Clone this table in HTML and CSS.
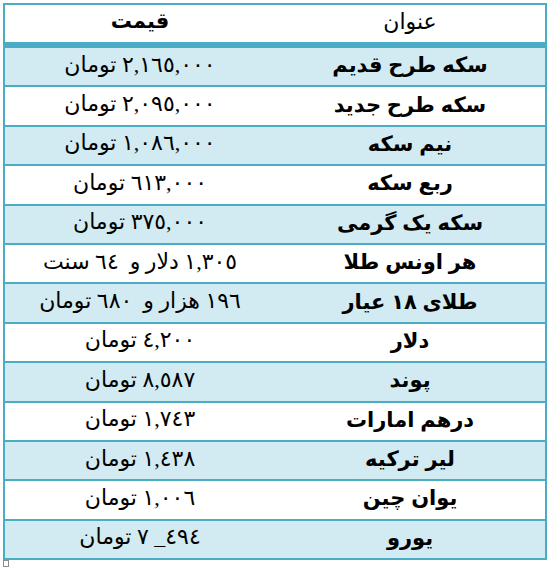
FILE: index.html
```html
<!DOCTYPE html>
<html lang="fa">
<head>
<meta charset="utf-8">
<link rel="stylesheet" href="styles.css">
</head>
<body>
<div class="page">
<table class="prices" dir="rtl">
  <thead>
    <tr>
      <th class="title-col head-title">عنوان</th>
      <th class="price-col head-price">قیمت</th>
    </tr>
  </thead>
  <tbody>
    <tr class="shade"><td class="title-col">سکه طرح قدیم</td><td class="price-col">٢,١٦٥,٠٠٠ تومان</td></tr>
    <tr><td class="title-col">سکه طرح جدید</td><td class="price-col">٢,٠٩٥,٠٠٠ تومان</td></tr>
    <tr class="shade"><td class="title-col">نیم سکه</td><td class="price-col">١,٠٨٦,٠٠٠ تومان</td></tr>
    <tr><td class="title-col">ربع سکه</td><td class="price-col">٦١٣,٠٠٠ تومان</td></tr>
    <tr class="shade"><td class="title-col">سکه یک گرمی</td><td class="price-col">٣٧٥,٠٠٠ تومان</td></tr>
    <tr><td class="title-col">هر اونس طلا</td><td class="price-col">١,٣٠٥ دلار و&nbsp; ٦٤ سنت</td></tr>
    <tr class="shade"><td class="title-col">طلای ١٨ عیار</td><td class="price-col">١٩٦ هزار و&nbsp; ٦٨٠ تومان</td></tr>
    <tr><td class="title-col">دلار</td><td class="price-col">٤,٢٠٠ تومان</td></tr>
    <tr class="shade"><td class="title-col">پوند</td><td class="price-col">٨,٥٨٧ تومان</td></tr>
    <tr><td class="title-col">درهم امارات</td><td class="price-col">١,٧٤٣ تومان</td></tr>
    <tr class="shade"><td class="title-col">لیر ترکیه</td><td class="price-col">١,٤٣٨ تومان</td></tr>
    <tr><td class="title-col">یوان چین</td><td class="price-col">١,٠٠٦ تومان</td></tr>
    <tr class="shade"><td class="title-col">یورو</td><td class="price-col">٤٩٤_ ٧ تومان</td></tr>
  </tbody>
</table>
<div class="para-mark"></div>
</div>
</body>
</html>
```

FILE: styles.css
```css
html, body {
  margin: 0;
  padding: 0;
  background: #ffffff;
}

.page {
  padding: 3px 0 0 3px;
}

.prices {
  border-collapse: separate;
  border-spacing: 0;
  width: 544px;
  table-layout: fixed;
  border-right: 2px solid #4bacc6;
  border-bottom: 2px solid #4bacc6;
  color: #000;
}

.prices th,
.prices td {
  border-top: 2px solid #4bacc6;
  padding: 0 0 4px 0;
  text-align: center;
  vertical-align: middle;
  width: 269px;
  line-height: 1;
}

.prices .title-col { border-left: 0; }
.prices .price-col { border-left: 2px solid #4bacc6; }

.prices td {
  height: 33.4px;
}

.prices th {
  height: 33px;
  border-bottom: 4px solid #4bacc6;
  background: #ffffff;
}

.shade td {
  background: #d2eaf1;
}

.title-col {
  font-family: "Liberation Sans", "DejaVu Sans", sans-serif;
  font-weight: bold;
  font-size: 21px;
}

.price-col {
  font-family: "Liberation Serif", "DejaVu Sans", serif;
  font-weight: normal;
  font-size: 22px;
}

.head-title {
  font-weight: normal;
  font-size: 22px;
}

.head-price {
  font-weight: bold;
  font-size: 21px;
}

.para-mark {
  width: 4px;
  height: 5px;
  border: 1px solid #8c8c8c;
}
```
